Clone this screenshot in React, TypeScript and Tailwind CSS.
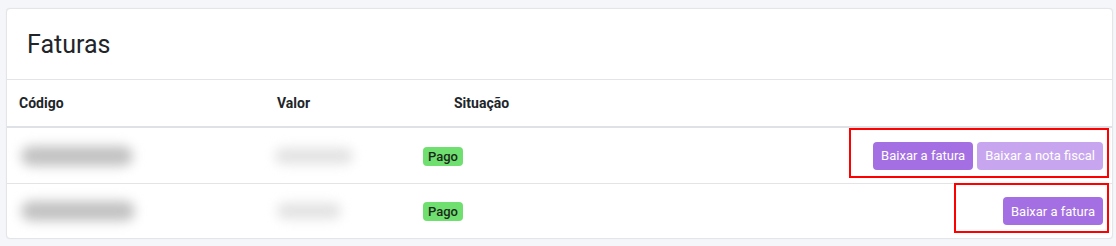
import React from "react";

const font = { fontFamily: "Roboto, 'Noto Sans', Arial, sans-serif" };

function Blur({ w, h, dark }: { w: number; h: number; dark?: boolean }) {
  return (
    <span
      className={`inline-block rounded-full blur-[6px] ${dark ? "bg-[#c2c2c2]" : "bg-[#e2e2e2]"}`}
      style={{ width: w, height: h }}
    />
  );
}

function Btn({ children, faded }: { children: React.ReactNode; faded?: boolean }) {
  return (
    <button
      className={`h-[28px] px-[8px] rounded-[4px] text-[13px] leading-none text-white ${
        faded ? "bg-[#c7a6ef]" : "bg-[#a46fe2]"
      }`}
    >
      {children}
    </button>
  );
}

function Badge() {
  return (
    <span className="inline-flex items-center justify-center w-[40px] h-[19px] rounded-[4px] bg-[#6fe06f] text-[13px] font-medium text-[#1b2a1b]">
      Pago
    </span>
  );
}

export default function App() {
  return (
    <div className="w-[1116px] h-[246px] bg-[#f4f6f9] pt-[8px] pl-[6px] pr-[3px]" style={font}>
      <div className="bg-white border border-[#e3e5e8] rounded-[4px] shadow-[0_0_1px_rgba(0,0,0,0.08)] overflow-hidden">
        <div className="h-[71px] border-b border-[#e2e4e7] flex items-center pl-[20px]">
          <h3 className="text-[25px] font-normal text-[#212529] leading-none">Faturas</h3>
        </div>
        <div className="h-[48px] border-b-2 border-[#dee2e6] flex items-center text-[14px] font-bold text-[#212529]">
          <div className="w-[258px] pl-[12px]">Código</div>
          <div className="w-[189px] pl-[12px]">Valor</div>
          <div className="pl-[0px]">Situação</div>
        </div>
        <div className="h-[56px] border-b border-[#e2e4e7] flex items-center">
          <div className="w-[258px] pl-[14px] flex items-center">
            <Blur w={112} h={20} dark />
          </div>
          <div className="w-[158px] pl-[10px] flex items-center">
            <Blur w={78} h={16} />
          </div>
          <div className="w-[60px]">
            <Badge />
          </div>
          <div className="flex-1 flex justify-end pr-[9px]">
            <div className="relative flex gap-[4px]">
              <Btn>Baixar a fatura</Btn>
              <Btn faded>Baixar a nota fiscal</Btn>
              <div className="absolute left-[-24px] right-[-6px] top-[-14px] bottom-[-8px] border-2 border-[#ff0000]" />
            </div>
          </div>
        </div>
        <div className="h-[54px] flex items-center">
          <div className="w-[258px] pl-[14px] flex items-center">
            <Blur w={114} h={20} dark />
          </div>
          <div className="w-[158px] pl-[12px] flex items-center">
            <Blur w={64} h={16} />
          </div>
          <div className="w-[60px]">
            <Badge />
          </div>
          <div className="flex-1 flex justify-end pr-[9px]">
            <div className="relative flex">
              <Btn>Baixar a fatura</Btn>
              <div className="absolute left-[-49px] right-[-6px] top-[-14px] bottom-[-8px] border-2 border-[#ff0000]" />
            </div>
          </div>
        </div>
      </div>
    </div>
  );
}
